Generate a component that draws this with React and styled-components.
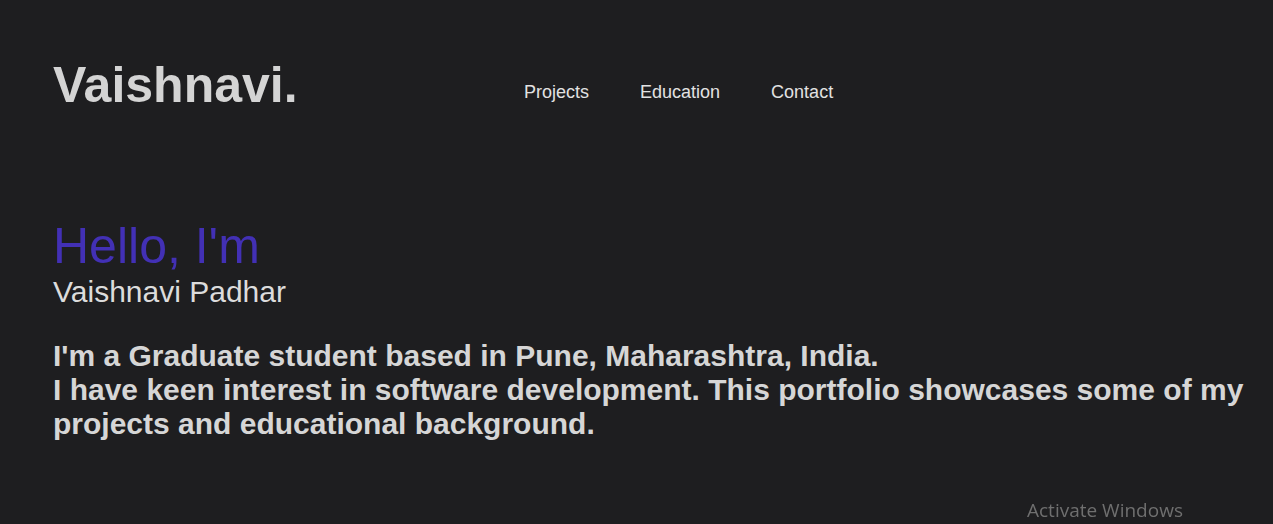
import React from "react";
import styled, { createGlobalStyle } from "styled-components";

const GlobalStyle = createGlobalStyle`
  html, body {
    margin: 0;
    padding: 0;
    background: #1e1e20;
  }
  body {
    font-family: "Liberation Sans", Arial, sans-serif;
    color: #d6d6d6;
    min-height: 524px;
  }
`;

const Page = styled.div`
  min-height: 524px;
  background: #1e1e20;
`;

const Header = styled.header`
  display: grid;
  grid-template-columns: 471px auto;
  align-items: start;
  padding: 56px 53px 0;
`;

const Logo = styled.h1`
  margin: 0;
  font-size: 50px;
  font-weight: 700;
  color: #d4d4d4;
`;

const Nav = styled.nav`
  display: flex;
  gap: 51px;
  padding-top: 26px;
`;

const NavLink = styled.a`
  font-size: 18px;
  color: #e2e2e2;
  text-decoration: none;
`;

const Hero = styled.section`
  padding: 103px 20px 0 53px;
`;

const Greeting = styled.h2`
  margin: 0;
  font-size: 50px;
  font-weight: 400;
  color: #4230b5;
`;

const Name = styled.h3`
  margin: 0;
  font-size: 30px;
  font-weight: 400;
  color: #dcdcdc;
`;

const About = styled.p`
  margin: 30px 0 0;
  font-size: 30px;
  font-weight: 700;
  color: #d6d6d6;
`;

const Watermark = styled.div`
  position: fixed;
  left: 1027px;
  top: 497px;
  font-family: "Open Sans", "Noto Sans", sans-serif;
  font-size: 19px;
  color: #6f6f6f;
  white-space: nowrap;
`;

export default function App() {
  return (
    <Page>
      <GlobalStyle />
      <Header>
        <Logo>Vaishnavi.</Logo>
        <Nav>
          <NavLink href="#projects">Projects</NavLink>
          <NavLink href="#education">Education</NavLink>
          <NavLink href="#contact">Contact</NavLink>
        </Nav>
      </Header>
      <Hero>
        <Greeting>Hello, I'm</Greeting>
        <Name>Vaishnavi Padhar</Name>
        <About>
          I'm a Graduate student based in Pune, Maharashtra, India.
          <br />
          I have keen interest in software development. This portfolio showcases some of my projects and educational background.
        </About>
      </Hero>
      <Watermark>Activate Windows</Watermark>
    </Page>
  );
}
